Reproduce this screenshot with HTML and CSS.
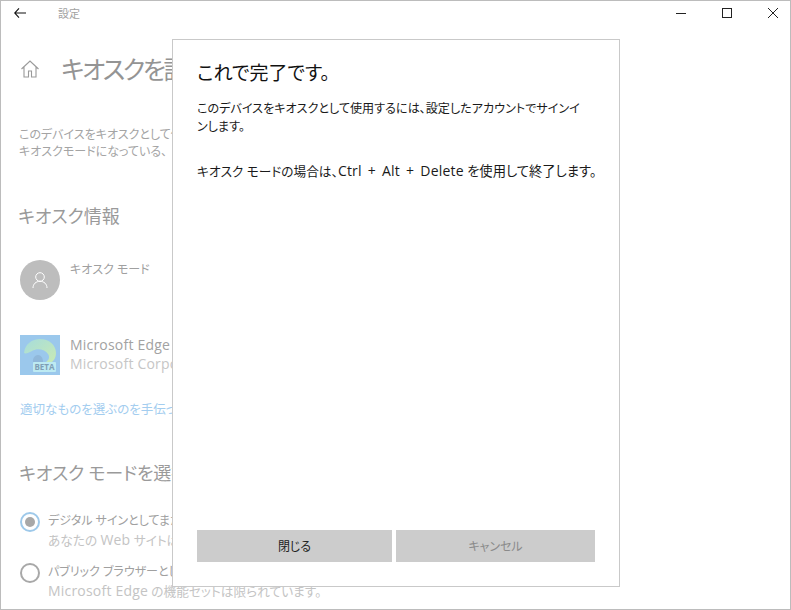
FILE: index.html
```html
<!DOCTYPE html>
<html lang="ja">
<head>
<meta charset="utf-8">
<title>設定</title>
<link rel="stylesheet" href="styles.css">
</head>
<body>
<div class="window">
  <header class="titlebar">
    <div class="title-left">
      <svg class="back" width="12" height="10" viewBox="0 0 12 10"><path d="M5 .4.7 5 5 9.600M.7 5H12" fill="none" stroke="#111" stroke-width="1.100"/></svg>
      <span class="app-name">設定</span>
    </div>
    <div class="controls">
      <svg width="12" height="12" viewBox="0 0 12 12"><path d="M1 6.500h10" stroke="#222" stroke-width="1"/></svg>
      <svg width="12" height="12" viewBox="0 0 12 12"><rect x="1.500" y="1.500" width="9" height="9" fill="none" stroke="#222" stroke-width="1"/></svg>
      <svg width="12" height="12" viewBox="0 0 12 12"><path d="M1 1l10 10M11 1 1 11" stroke="#222" stroke-width="1"/></svg>
    </div>
  </header>
  <main class="page">
    <div class="page-head">
      <svg class="home" width="20" height="20" viewBox="0 0 20 20"><path d="M1.500 10 10 2l8.500 8M4 8v10h4.500v-6h3v6H16V8" fill="none" stroke="#9a9a9a" stroke-width="1.100"/></svg>
      <h1 class="page-title">キオスクを設定する</h1>
    </div>
    <p class="intro">このデバイスをキオスクとして使用すると、1 つのアプリのみ実行されます。<br>キオスクモードになっている、</p>
    <h2 class="section first">キオスク情報</h2>
    <div class="row user-row">
      <div class="avatar">
        <svg width="18" height="18" viewBox="0 0 18 18"><circle cx="9" cy="6" r="4.300" fill="none" stroke="#fff" stroke-width="1"/><path d="M2 17c0-4 3-6.700 7-6.700s7 2.700 7 6.700" fill="none" stroke="#fff" stroke-width="1"/></svg>
      </div>
      <div class="row-name">キオスク モード</div>
    </div>
    <div class="row app-row">
      <div class="edge">
        <svg width="40" height="40" viewBox="0 0 40 40">
          <defs>
            <linearGradient id="swirl" x1="0" y1="0" x2="1" y2="1">
              <stop offset="0" stop-color="#a6dcdc"/>
              <stop offset="1" stop-color="#c8eab4"/>
            </linearGradient>
          </defs>
          <rect width="40" height="40" fill="#9bc8ec"/>
          <path d="M4 18C5 9 12 4 20 4c9 0 16 6 16 14 0 4-1.500 7-4 9h-6c3-2 4-5 2-8-3-5-11-6-16-3-4 2-6 3-8 2z" fill="url(#swirl)"/>
          <path d="M13 27c-.5-4 2-7 5-7 3 0 5 3 5 7z" fill="#90b8da"/>
          <rect x="13" y="27" width="23" height="10" rx="1" fill="#bdeaf2"/>
          <text x="24.500" y="35" class="beta">BETA</text>
        </svg>
      </div>
      <div class="app-text">
        <div class="app-name-line">Microsoft Edge Beta</div>
        <div class="app-corp">Microsoft Corporation</div>
      </div>
    </div>
    <a class="help-link">適切なものを選ぶのを手伝ってください</a>
    <h2 class="section second">キオスク モードを選択する</h2>
    <div class="radio-row">
      <span class="radio checked"></span>
      <div>
        <div class="radio-title">デジタル サインとしてまたは対話型ディスプレイとして</div>
        <div class="radio-sub">あなたの <span class="lat">Web</span> サイトは全画面表示で実行されます。</div>
      </div>
    </div>
    <div class="radio-row">
      <span class="radio"></span>
      <div>
        <div class="radio-title">パブリック ブラウザーとして</div>
        <div class="radio-sub"><span class="lat">Microsoft Edge</span> の機能セットは限られています。</div>
      </div>
    </div>
  </main>
  <section class="dialog">
    <h2 class="dialog-title">これで完了です。</h2>
    <p class="dialog-text">このデバイスをキオスクとして使用するには、設定したアカウントでサインイ<br>ンします。</p>
    <p class="dialog-text second-text">キオスク モードの場合は、<span class="lat keys">Ctrl + Alt + Delete</span> <span class="tail">を使用して終了します。</span></p>
    <div class="dialog-actions">
      <button class="btn">閉じる</button>
      <button class="btn disabled">キャンセル</button>
    </div>
  </section>
</div>
</body>
</html>
```
FILE: styles.css
```css
* { box-sizing: border-box; }
html, body { margin: 0; height: 100%; }
body {
  background: #fff;
  font-family: "Open Sans", "Noto Sans CJK JP", sans-serif;
  font-feature-settings: "palt";
  font-size: 12px;
  overflow: hidden;
}
.window {
  position: relative;
  width: 791px;
  height: 610px;
  border: 1px solid #bcbcbc;
  overflow: hidden;
  background: #fff;
}
.titlebar {
  display: flex;
  justify-content: space-between;
  height: 24px;
  align-items: center;
}
.title-left { display: flex; align-items: center; padding-left: 13px; }
.back { display: block; }
.app-name { margin-left: 32px; color: #a2a2a2; font-size: 11px; }
.controls { display: flex; gap: 34px; padding-right: 11px; align-items: center; }
.controls svg { display: block; }
.page { padding: 0 0 0 17px; white-space: nowrap; }
.page-head { display: flex; align-items: center; margin-top: 24px; height: 40px; }
.home { margin-left: 2px; }
.page-title { margin: 0 0 0 21px; font-size: 25px; letter-spacing: -2.400px; font-weight: 400; color: #949494; line-height: 40px; }
.intro { margin: 37px 0 0 1px; font-size: 12px; line-height: 17px; color: #a4a4a4; }
.section { margin: 0; font-weight: 400; font-size: 18px; line-height: 26px; color: #9a9a9a; }
.section.first { margin-top: 43px; }
.section.second { margin: 41px 0 0 1px; letter-spacing: -.2px; }
.row { display: flex; margin-left: 2px; }
.user-row { margin-top: 31px; height: 40px; }
.avatar { width: 40px; height: 40px; border-radius: 50%; background: #bdbdbd; display: flex; align-items: center; justify-content: center; }
.row-name { margin: 0 0 0 10px; color: #a0a0a0; font-size: 12px; line-height: 18px; padding-top: 1px; }
.app-row { margin-top: 35px; height: 40px; }
.edge { width: 40px; height: 40px; }
.edge svg { display: block; }
.beta { font-size: 8px; font-weight: 700; fill: #7f9fb5; text-anchor: middle; font-family: "Open Sans", sans-serif; }
.app-text { margin-left: 10px; font-size: 14px; line-height: 19px; letter-spacing: .2px; }
.app-name-line { color: #a2a2a2; }
.app-corp { color: #c6c6c6; }
.help-link { display: block; margin: 26px 0 0 2px; color: #a3cdef; font-size: 12.500px; line-height: 18px; }
.radio-row { display: flex; gap: 8px; margin-left: 2px; height: 51px; }
.section.second + .radio-row { margin-top: 26px; }
.radio { width: 20px; height: 20px; border-radius: 50%; border: 2px solid #a8a8a8; flex: none; display: flex; align-items: center; justify-content: center; }
.radio.checked { border-color: #9ec9ea; }
.radio.checked::after { content: ""; width: 10px; height: 10px; border-radius: 50%; background: #a8a8a8; }
.radio-title { color: #a0a0a0; font-size: 12px; line-height: 18px; }
.radio-sub { color: #c4c4c4; font-size: 12.700px; line-height: 20px; }
.lat { font-size: 14px; letter-spacing: .2px; }
.keys { word-spacing: 2.200px; }
.tail { font-size: 13.300px; }
.dialog {
  position: absolute;
  left: 171px;
  top: 38px;
  width: 448px;
  height: 548px;
  background: #fff;
  border: 1px solid #c9c9c9;
  display: flex;
  flex-direction: column;
  padding: 0 24px 24px;
}
.dialog-title { margin: 20px 0 0; font-size: 19px; font-weight: 400; line-height: 26px; color: #111; }
.dialog-text { margin: 14px 0 0; font-size: 12.100px; line-height: 18px; color: #1a1a1a; }
.second-text { margin-top: 26px; font-size: 12.700px; white-space: nowrap; }
.dialog-actions { margin-top: auto; display: flex; gap: 4px; }
.btn {
  flex: none;
  height: 32px;
  width: 195px;
  background: #ccc;
  border: 0;
  padding: 0;
  font: inherit;
  color: #222;
}
.btn.disabled { width: 199px; color: #8a8a8a; }
```
